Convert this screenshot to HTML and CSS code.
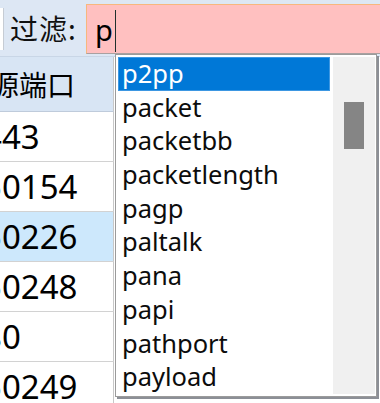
FILE: index.html
```html
<!DOCTYPE html>
<html>

<head>
    <meta charset="utf-8">
    <title>过滤</title>
    <link rel="stylesheet" href="styles.css">
</head>

<body>
    <div class="toolbar">
        <div class="stub"></div>
        <label class="filter-label">过滤:</label>
        <div class="filter-input">p<span class="caret"></span></div>
    </div>

    <div class="table">
        <div class="cell head"><span class="clip">源端口</span></div>
        <div class="cell"><span class="clip">443</span></div>
        <div class="cell"><span class="clip">50154</span></div>
        <div class="cell hover"><span class="clip">50226</span></div>
        <div class="cell"><span class="clip">50248</span></div>
        <div class="cell"><span class="clip">80</span></div>
        <div class="cell"><span class="clip">50249</span></div>
    </div>

    <div class="popup">
        <ul class="list">
            <li class="selected">p2pp</li>
            <li>packet</li>
            <li>packetbb</li>
            <li>packetlength</li>
            <li>pagp</li>
            <li>paltalk</li>
            <li>pana</li>
            <li>papi</li>
            <li>pathport</li>
            <li>payload</li>
        </ul>
        <div class="scrollbar">
            <div class="thumb"></div>
        </div>
    </div>
</body>

</html>
```

FILE: styles.css
```css
html, body {
    margin: 0;
    padding: 0;
}

body {
    width: 380px;
    height: 403px;
    overflow: hidden;
    position: relative;
    background-color: #ffffff;
    font-family: "Noto Sans", "Noto Sans CJK SC", sans-serif;
    color: #000;
}

.toolbar {
    height: 56px;
    display: flex;
    align-items: center;
    background-color: #dde7f4;
    border-bottom: 1px solid #c9d6e6;
}

.stub {
    width: 3px;
    height: 42px;
    background-color: #fff;
    border-right: 1px solid #c6ccd4;
    margin-top: 2px;
}

.filter-label {
    width: 70px;
    font-family: "Noto Sans CJK SC", sans-serif;
    font-size: 28px;
    line-height: 1;
    letter-spacing: 1px;
    margin-left: 6px;
    margin-right: 6px;
    color: #101010;
}

.filter-input {
    flex: 1;
    align-self: flex-start;
    margin-top: 4px;
    height: 48px;
    display: flex;
    align-items: center;
    padding-left: 8px;
    background-color: #ffc0c0;
    border-top: 1px solid #f7b77e;
    border-left: 1px solid #f7b77e;
    border-bottom: 1px solid #a9a0a0;
    font-size: 29px;
    line-height: 1;
}

.caret {
    display: inline-block;
    width: 1px;
    height: 42px;
    margin-left: 2px;
    margin-top: 4px;
    background-color: #20302c;
}

.table {
    width: 114px;
    display: flex;
    flex-direction: column;
}

.cell {
    height: 49px;
    display: flex;
    align-items: center;
    border-bottom: 1px solid #d2d2d2;
    border-right: 1px solid #c8c8c8;
    font-size: 33px;
    line-height: 1;
    overflow: hidden;
    white-space: nowrap;
}

.cell .clip {
    margin-left: -17px;
}

.cell.head {
    height: 54px;
    background-color: #d8e5f4;
    border-bottom: 1px solid #bfcbdb;
    font-family: "Noto Sans CJK SC", sans-serif;
    font-size: 28px;
}

.cell.head .clip {
    margin-left: -9px;
}

.cell.hover {
    background-color: #cde8fc;
}

.popup {
    position: absolute;
    left: 115px;
    top: 54px;
    width: 260px;
    height: 341px;
    display: flex;
    background-color: #fff;
    border: 1px solid #9b9b9b;
    box-shadow: 2px 2px 0 #8c8f96;
}

.list {
    list-style: none;
    margin: 0;
    padding: 2px 0 2px 2px;
    width: 212px;
}

.list li {
    height: 33.7px;
    line-height: 32px;
    padding-left: 4px;
    font-size: 25.5px;
    color: #0c0c0c;
}

.list li.selected {
    background-color: #0078d7;
    color: #fff;
    box-shadow: inset 0 0 0 1px #3d97e2;
}

.scrollbar {
    margin-left: 3px;
    width: 42px;
    height: 337px;
    margin-top: 2px;
    background-color: #f0f0f0;
}

.thumb {
    margin: 45px auto 0;
    width: 20px;
    height: 47px;
    background-color: #858585;
}
```
